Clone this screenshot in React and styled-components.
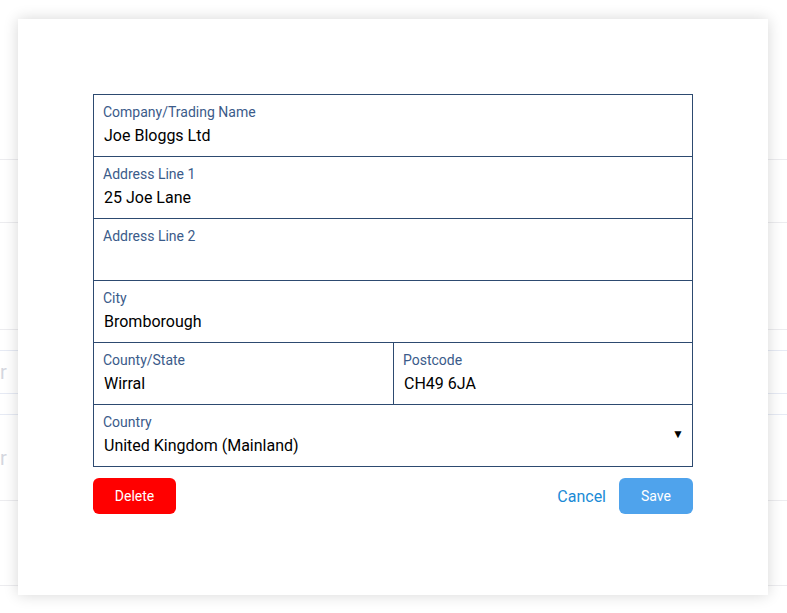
import React from 'react'
import styled, { createGlobalStyle } from 'styled-components'

const GlobalStyle = createGlobalStyle`
  html, body {
    margin: 0;
    padding: 0;
    background: #fff;
    font-family: Roboto, 'Liberation Sans', Arial, sans-serif;
  }
  * {
    box-sizing: border-box;
  }
`

const Page = styled.div`
  position: relative;
  width: 787px;
  height: 613px;
  overflow: hidden;
  background: #fff;
`

const Backdrop = styled.div`
  display: flex;
  flex-direction: column;
`

const BgRow = styled.div`
  height: ${(p) => p.h}px;
  border-bottom: 1px solid ${(p) => (p.tint ? '#e6eaf4' : '#ececef')};
  display: flex;
  align-items: center;
  color: #d4d6de;
  font-size: 20px;
`

const Modal = styled.div`
  position: absolute;
  left: 18px;
  top: 19px;
  width: 750px;
  height: 576px;
  background: #fff;
  box-shadow: 0 0 14px rgba(0, 0, 0, 0.16);
  padding: 75px 75px 0;
`

const Form = styled.div`
  width: 600px;
  border: 1px solid #2d4a70;
  display: flex;
  flex-direction: column;
`

const Row = styled.div`
  display: grid;
  grid-template-columns: ${(p) => (p.split ? '1fr 1fr' : '1fr')};
  & + & {
    border-top: 1px solid #2d4a70;
  }
`

const Cell = styled.div`
  height: 61px;
  padding: 8px 9px 0;
  display: flex;
  align-items: center;
  & + & {
    border-left: 1px solid #2d4a70;
  }
`

const Field = styled.div`
  flex: 1;
  align-self: stretch;
  display: flex;
  flex-direction: column;
`

const Label = styled.span`
  font-size: 14px;
  line-height: 18px;
  color: #3b5b8a;
`

const Value = styled.span`
  font-size: 16px;
  line-height: 24px;
  height: 24px;
  margin-top: 3px;
  padding-left: 1px;
  color: #000;
`

const Caret = styled.span`
  font-size: 12px;
  color: #000;
  margin-right: -1px;
  margin-top: -12px;
`

const Actions = styled.div`
  width: 600px;
  margin-top: 11px;
  display: flex;
  align-items: center;
`

const Button = styled.button`
  height: 36px;
  width: ${(p) => p.w}px;
  border: none;
  border-radius: 6px;
  background: ${(p) => p.bg};
  color: #fff;
  font-family: inherit;
  font-size: 14px;
  padding: 0;
  cursor: pointer;
`

const LinkButton = styled.button`
  margin-left: auto;
  margin-right: 13px;
  border: none;
  background: none;
  padding: 0;
  font-family: inherit;
  font-size: 16px;
  color: #1a8ad6;
  cursor: pointer;
`

const bgRows = [
  { h: 160 },
  { h: 63 },
  { h: 107 },
  { h: 21, tint: true },
  { h: 43, tint: true, text: 'r' },
  { h: 21, tint: true },
  { h: 86, text: 'r' },
  { h: 85 },
]

function TextField({ label, value, select }) {
  return (
    <Cell>
      <Field>
        <Label>{label}</Label>
        <Value>{value}</Value>
      </Field>
      {select && <Caret>▼</Caret>}
    </Cell>
  )
}

export default function App() {
  return (
    <Page>
      <GlobalStyle />
      <Backdrop>
        {bgRows.map((r, i) => (
          <BgRow key={i} h={r.h} tint={r.tint}>
            {r.text}
          </BgRow>
        ))}
      </Backdrop>
      <Modal>
        <Form>
          <Row>
            <TextField label="Company/Trading Name" value="Joe Bloggs Ltd" />
          </Row>
          <Row>
            <TextField label="Address Line 1" value="25 Joe Lane" />
          </Row>
          <Row>
            <TextField label="Address Line 2" value="" />
          </Row>
          <Row>
            <TextField label="City" value="Bromborough" />
          </Row>
          <Row split>
            <TextField label="County/State" value="Wirral" />
            <TextField label="Postcode" value="CH49 6JA" />
          </Row>
          <Row>
            <TextField label="Country" value="United Kingdom (Mainland)" select />
          </Row>
        </Form>
        <Actions>
          <Button w={83} bg="#ff0000">Delete</Button>
          <LinkButton>Cancel</LinkButton>
          <Button w={74} bg="#4fa3ec">Save</Button>
        </Actions>
      </Modal>
    </Page>
  )
}
